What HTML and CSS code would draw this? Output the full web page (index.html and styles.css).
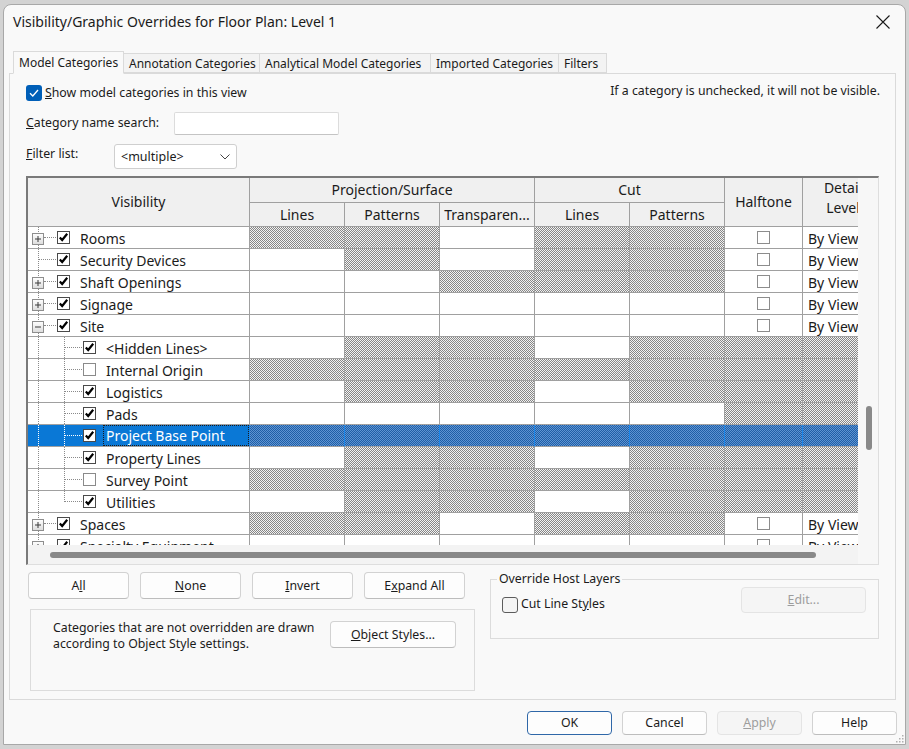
FILE: index.html
```html
<!DOCTYPE html>
<html>
<head>
<meta charset="utf-8">
<link rel="stylesheet" href="styles.css">
</head>
<body>
<svg class="defs" width="0" height="0">
  <defs>
    <linearGradient id="eg" x1="0" y1="0" x2="0" y2="1">
      <stop offset="0" stop-color="#ffffff"/>
      <stop offset="1" stop-color="#dcdcdc"/>
    </linearGradient>
    <symbol id="plus" viewBox="0 0 12 12">
      <rect x="0.5" y="0.5" width="11" height="11" fill="url(#eg)" stroke="#8e8e8e"/>
      <path d="M3 6H9M6 3V9" stroke="#3a3a3a" stroke-width="1"/>
    </symbol>
    <symbol id="minus" viewBox="0 0 12 12">
      <rect x="0.5" y="0.5" width="11" height="11" fill="url(#eg)" stroke="#8e8e8e"/>
      <path d="M3 6H9" stroke="#3a3a3a" stroke-width="1"/>
    </symbol>
    <symbol id="ck" viewBox="0 0 13 13">
      <rect x="0.5" y="0.5" width="12" height="12" fill="#fff" stroke="#4a4a4a"/>
      <path d="M2.8 6.4L5.2 9L10.2 2.8" fill="none" stroke="#000" stroke-width="2.2"/>
    </symbol>
    <symbol id="uck" viewBox="0 0 13 13">
      <rect x="0.5" y="0.5" width="12" height="12" fill="#fff" stroke="#8a8a8a"/>
    </symbol>
    <symbol id="hb" viewBox="0 0 13 13">
      <rect x="0.5" y="0.5" width="12" height="12" fill="#fff" stroke="#8c8c8c"/>
    </symbol>
  </defs>
</svg>
<div class="dialog">
  <div class="titlebar">
    <span class="title">Visibility/Graphic Overrides for Floor Plan: Level 1</span>
    <svg class="close" width="14" height="14" viewBox="0 0 14 14"><path d="M0.5 0.5L13.5 13.5M13.5 0.5L0.5 13.5" stroke="#1a1a1a" stroke-width="1.1"/></svg>
  </div>
  <div class="tabs">
    <div class="tab active t1">Model Categories</div>
    <div class="tab t2">Annotation Categories</div>
    <div class="tab t3">Analytical Model Categories</div>
    <div class="tab t4">Imported Categories</div>
    <div class="tab t5">Filters</div>
  </div>
  <div class="panel">
    <div class="row-top">
      <div class="chkline">
        <span class="cbx-blue"><svg width="16" height="16" viewBox="0 0 16 16"><path d="M4 8.2L6.8 11L12 5" fill="none" stroke="#fff" stroke-width="1.3"/></svg></span>
        <span class="lbl"><u>S</u>how model categories in this view</span>
      </div>
      <span class="lbl hint">If a category is unchecked, it will not be visible.</span>
    </div>
    <div class="row-search">
      <span class="lbl w148"><u>C</u>ategory name search:</span>
      <span class="input"></span>
    </div>
    <div class="row-filter">
      <span class="lbl w88"><u>F</u>ilter list:</span>
      <span class="select"><span class="seltext">&lt;multiple&gt;</span><svg width="10" height="6" viewBox="0 0 10 6"><path d="M0.5 0.5L5 5L9.5 0.5" fill="none" stroke="#444" stroke-width="1"/></svg></span>
    </div>

    <div class="grid">
      <div class="grid-main">
        <div class="grid-view">
          <div class="hdr">
            <div class="hc vis-h">Visibility</div>
            <div class="hc ps">Projection/Surface</div>
            <div class="hc cut">Cut</div>
            <div class="hc half">Halftone</div>
            <div class="hc det">Detail<br>Level</div>
            <div class="hc">Lines</div>
            <div class="hc">Patterns</div>
            <div class="hc">Transparen...</div>
            <div class="hc">Lines</div>
            <div class="hc">Patterns</div>
          </div>

          <div class="row">
            <div class="vis top"><svg class="exp"><use href="#plus"/></svg><span class="conn c12"></span><svg class="cb"><use href="#ck"/></svg><span class="name">Rooms</span></div>
            <div class="h"></div><div class="h"></div><div class="w"></div><div class="h"></div><div class="h"></div>
            <div class="w ht"><svg class="hb"><use href="#hb"/></svg></div><div class="w bv">By View</div>
          </div>
          <div class="row">
            <div class="vis top"><span class="sp6"></span><span class="conn c18"></span><svg class="cb"><use href="#ck"/></svg><span class="name">Security Devices</span></div>
            <div class="w"></div><div class="h"></div><div class="w"></div><div class="h"></div><div class="h"></div>
            <div class="w ht"><svg class="hb"><use href="#hb"/></svg></div><div class="w bv">By View</div>
          </div>
          <div class="row">
            <div class="vis top"><svg class="exp"><use href="#plus"/></svg><span class="conn c12"></span><svg class="cb"><use href="#ck"/></svg><span class="name">Shaft Openings</span></div>
            <div class="w"></div><div class="w"></div><div class="h"></div><div class="h"></div><div class="h"></div>
            <div class="w ht"><svg class="hb"><use href="#hb"/></svg></div><div class="w bv">By View</div>
          </div>
          <div class="row">
            <div class="vis top"><svg class="exp"><use href="#plus"/></svg><span class="conn c12"></span><svg class="cb"><use href="#ck"/></svg><span class="name">Signage</span></div>
            <div class="w"></div><div class="w"></div><div class="w"></div><div class="w"></div><div class="w"></div>
            <div class="w ht"><svg class="hb"><use href="#hb"/></svg></div><div class="w bv">By View</div>
          </div>
          <div class="row">
            <div class="vis top site"><svg class="exp"><use href="#minus"/></svg><span class="conn c12"></span><svg class="cb"><use href="#ck"/></svg><span class="name">Site</span></div>
            <div class="w"></div><div class="w"></div><div class="w"></div><div class="w"></div><div class="w"></div>
            <div class="w ht"><svg class="hb"><use href="#hb"/></svg></div><div class="w bv">By View</div>
          </div>
          <div class="row">
            <div class="vis child"><span class="sp32"></span><span class="conn c18"></span><svg class="cb"><use href="#ck"/></svg><span class="name">&lt;Hidden Lines&gt;</span></div>
            <div class="w"></div><div class="h"></div><div class="h"></div><div class="w"></div><div class="h"></div><div class="h"></div><div class="h"></div>
          </div>
          <div class="row">
            <div class="vis child"><span class="sp32"></span><span class="conn c18"></span><svg class="cb"><use href="#uck"/></svg><span class="name">Internal Origin</span></div>
            <div class="h"></div><div class="h"></div><div class="h"></div><div class="h"></div><div class="h"></div><div class="h"></div><div class="h"></div>
          </div>
          <div class="row">
            <div class="vis child"><span class="sp32"></span><span class="conn c18"></span><svg class="cb"><use href="#ck"/></svg><span class="name">Logistics</span></div>
            <div class="w"></div><div class="h"></div><div class="h"></div><div class="w"></div><div class="h"></div><div class="h"></div><div class="h"></div>
          </div>
          <div class="row">
            <div class="vis child"><span class="sp32"></span><span class="conn c18"></span><svg class="cb"><use href="#ck"/></svg><span class="name">Pads</span></div>
            <div class="w"></div><div class="w"></div><div class="w"></div><div class="w"></div><div class="w"></div><div class="h"></div><div class="h"></div>
          </div>
          <div class="row sel">
            <div class="vis child"><span class="sp32"></span><span class="conn c18"></span><svg class="cb"><use href="#ck"/></svg><span class="name focus">Project Base Point</span></div>
            <div class="h"></div><div class="h"></div><div class="h"></div><div class="h"></div><div class="h"></div><div class="h"></div><div class="h"></div>
          </div>
          <div class="row">
            <div class="vis child"><span class="sp32"></span><span class="conn c18"></span><svg class="cb"><use href="#ck"/></svg><span class="name">Property Lines</span></div>
            <div class="w"></div><div class="h"></div><div class="h"></div><div class="w"></div><div class="h"></div><div class="h"></div><div class="h"></div>
          </div>
          <div class="row">
            <div class="vis child"><span class="sp32"></span><span class="conn c18"></span><svg class="cb"><use href="#uck"/></svg><span class="name">Survey Point</span></div>
            <div class="h"></div><div class="h"></div><div class="h"></div><div class="h"></div><div class="h"></div><div class="h"></div><div class="h"></div>
          </div>
          <div class="row">
            <div class="vis child last"><span class="sp32"></span><span class="conn c18"></span><svg class="cb"><use href="#ck"/></svg><span class="name">Utilities</span></div>
            <div class="w"></div><div class="h"></div><div class="h"></div><div class="w"></div><div class="h"></div><div class="h"></div><div class="h"></div>
          </div>
          <div class="row">
            <div class="vis top"><svg class="exp"><use href="#plus"/></svg><span class="conn c12"></span><svg class="cb"><use href="#ck"/></svg><span class="name">Spaces</span></div>
            <div class="h"></div><div class="h"></div><div class="w"></div><div class="h"></div><div class="h"></div>
            <div class="w ht"><svg class="hb"><use href="#hb"/></svg></div><div class="w bv">By View</div>
          </div>
          <div class="row">
            <div class="vis top"><svg class="exp"><use href="#plus"/></svg><span class="conn c12"></span><svg class="cb"><use href="#ck"/></svg><span class="name">Specialty Equipment</span></div>
            <div class="w"></div><div class="w"></div><div class="w"></div><div class="w"></div><div class="w"></div>
            <div class="w ht"><svg class="hb"><use href="#hb"/></svg></div><div class="w bv">By View</div>
          </div>
        </div>
        <div class="hscroll"><div class="hthumb"></div></div>
      </div>
      <div class="vscroll"><div class="vthumb"></div></div>
    </div>

    <div class="lower">
      <div class="lower-left">
        <div class="btnrow">
          <button class="btn b101">A<u>l</u>l</button>
          <button class="btn b101"><u>N</u>one</button>
          <button class="btn b101"><u>I</u>nvert</button>
          <button class="btn b101">E<u>x</u>pand All</button>
        </div>
        <div class="note">
          <p class="notetext">Categories that are not overridden are drawn according to Object Style settings.</p>
          <button class="btn objst"><u>O</u>bject Styles...</button>
        </div>
      </div>
      <fieldset class="host">
        <legend>Override Host Layers</legend>
        <div class="hostrow">
          <span class="cbx-round"></span>
          <span class="lbl">Cut Line St<u>y</u>les</span>
          <button class="btn dis edit"><u>E</u>dit...</button>
        </div>
      </fieldset>
    </div>
  </div>
  <div class="footer">
    <button class="btn fb ok">OK</button>
    <button class="btn fb">Cancel</button>
    <button class="btn fb dis"><u>A</u>pply</button>
    <button class="btn fb">Help</button>
  </div>
  <svg class="grip" width="8" height="8" viewBox="0 0 8 8"><g fill="#b0b0b0"><rect x="6" y="0" width="1.5" height="1.5"/><rect x="3" y="3" width="1.5" height="1.5"/><rect x="6" y="3" width="1.5" height="1.5"/><rect x="0" y="6" width="1.5" height="1.5"/><rect x="3" y="6" width="1.5" height="1.5"/><rect x="6" y="6" width="1.5" height="1.5"/></g></svg>
</div>
</body>
</html>
```
FILE: styles.css
```css
* { box-sizing: border-box; }
html, body { margin: 0; padding: 0; }
body {
  background: #d3d3d3;
  font-family: "Noto Sans", "Open Sans", sans-serif;
  color: #1b1b1b;
  width: 909px;
  height: 749px;
  overflow: hidden;
}
.defs { position: absolute; width: 0; height: 0; overflow: hidden; }

.dialog {
  position: relative;
  margin: 4px 0 0 3px;
  width: 903px;
  height: 741px;
  background: #f9f9f9;
  border: 1px solid #a8a8a8;
  border-radius: 8px 8px 0 0;
  display: flex;
  flex-direction: column;
  overflow: hidden;
}

/* title */
.titlebar {
  height: 46px;
  flex: none;
  display: flex;
  align-items: flex-start;
  padding: 7px 15px 0 9px;
}
.title { font-size: 14px; line-height: 20px; }
.close { margin-left: auto; margin-top: 3px; }

/* tabs */
.tabs {
  height: 22px;
  flex: none;
  display: flex;
  align-items: flex-end;
  padding-left: 9px;
  position: relative;
  z-index: 1;
}
.tab {
  height: 20px;
  font-size: 12px;
  line-height: 19px;
  padding-left: 5px;
  white-space: nowrap;
  background: #f3f3f3;
  border-top: 1px solid #dadada;
  border-right: 1px solid #dadada;
  border-bottom: 1px solid #dadada;
}
.tab.active {
  height: 23px;
  margin-bottom: -1px;
  line-height: 21px;
  background: #f9f9f9;
  border: 1px solid #dadada;
  border-bottom: 1px solid #f9f9f9;
}
.t1 { width: 111px; }
.t2 { width: 136px; }
.t3 { width: 171px; }
.t4 { width: 128px; }
.t5 { width: 48px; }

/* panel */
.panel {
  flex: none;
  margin-left: 5px;
  width: 887px;
  height: 627px;
  border: 1px solid #dadada;
  padding: 0 14px 0 16px;
  display: flex;
  flex-direction: column;
}
.lbl { font-size: 12.3px; line-height: 16px; white-space: nowrap; }
.row-top {
  margin-top: 11px;
  height: 16px;
  display: flex;
  align-items: center;
  justify-content: space-between;
}
.chkline { display: flex; align-items: center; gap: 3px; }
.cbx-blue {
  width: 16px; height: 16px;
  background: #005fb8;
  border-radius: 3px;
  display: block;
}
.cbx-blue svg { display: block; }
.hint { margin-right: 1px; margin-top: -4px; }

.row-search {
  margin-top: 11px;
  height: 22px;
  display: flex;
  align-items: center;
}
.w148 { width: 148px; }
.w88 { width: 88px; }
.input {
  width: 165px;
  height: 23px;
  background: #fff;
  border: 1px solid #dcdcdc;
  border-bottom-color: #c4c4c4;
  border-radius: 2px;
}
.row-filter {
  margin-top: 10px;
  height: 24px;
  display: flex;
  align-items: flex-start;
}
.row-filter .lbl { line-height: 20px; }
.select {
  width: 123px;
  height: 25px;
  background: #fff;
  border: 1px solid #cfcfcf;
  border-radius: 3px;
  display: flex;
  align-items: center;
  padding: 0 6px 0 6px;
}
.seltext { font-size: 12.5px; line-height: 16px; flex: 1; }

/* grid */
.grid {
  margin-top: 8px;
  width: 853px;
  height: 389px;
  border-top: 2px solid #7a7a7a;
  border-left: 2px solid #7a7a7a;
  border-right: 1px solid #dedede;
  border-bottom: 1px solid #dedede;
  display: flex;
  flex: none;
}
.grid-main { width: 830px; display: flex; flex-direction: column; }
.grid-view { height: 367px; overflow: hidden; background: #fff; }
.hscroll { flex: 1; background: #f3f3f3; padding: 7px 0 0 22px; }
.hthumb { width: 766px; height: 6px; background: #898989; border-radius: 3px; }
.vscroll { width: 20px; background: #f7f7f7; padding: 228px 0 0 8px; }
.vthumb { width: 6px; height: 44px; background: #898989; border-radius: 3px; }

.hdr, .row {
  display: grid;
  grid-template-columns: 222px 95px 95px 95px 95px 95px 78px 80px;
  width: 855px;
  font-size: 14px;
}
.hdr { grid-template-rows: 25px 24px; background: #f0f0f0; }
.hc {
  border-right: 1px solid #a0a0a0;
  border-bottom: 1px solid #a0a0a0;
  text-align: center;
  line-height: 23px;
  white-space: nowrap;
  overflow: hidden;
}
.vis-h { grid-row: 1 / 3; line-height: 47px; }
.ps { grid-column: 2 / 5; }
.cut { grid-column: 5 / 7; }
.half { grid-column: 7; grid-row: 1 / 3; line-height: 47px; }
.det { grid-column: 8; grid-row: 1 / 3; line-height: 20px; padding-top: 0; border-right: none; }

.row > div {
  height: 22px;
  border-right: 1px solid #a0a0a0;
  border-bottom: 1px solid #a0a0a0;
}
.row > div:last-child { border-right: none; }
.h { background: repeating-conic-gradient(#868686 0 25%, #f2f2f2 0 50%) 0 0 / 2px 2px; }
.w { background: #fff; }
.ht { display: flex; align-items: center; justify-content: center; }
.hb { width: 13px; height: 13px; display: block; }
.bv { padding: 2px 0 0 5px; line-height: 19px; white-space: nowrap; }

.vis {
  display: flex;
  align-items: center;
  padding-left: 4px;
  background-color: #fff;
  background-image: repeating-linear-gradient(to bottom, #8a8a8a 0 1px, transparent 1px 2px);
  background-size: 1px 100%;
  background-repeat: no-repeat;
  background-position: 10px 0;
}
.vis.child {
  background-image:
    repeating-linear-gradient(to bottom, #8a8a8a 0 1px, transparent 1px 2px),
    repeating-linear-gradient(to bottom, #8a8a8a 0 1px, transparent 1px 2px);
  background-size: 1px 100%, 1px 100%;
  background-position: 10px 0, 36px 0;
}
.vis.child.last { background-size: 1px 100%, 1px 11px; }
.exp { width: 12px; height: 12px; display: block; flex: none; margin-top: 2px; }
.conn { height: 0; border-top: 1px dotted #8a8a8a; flex: none; }
.c12 { width: 12px; }
.c18 { width: 18px; }
.sp6 { width: 6px; flex: none; }
.sp32 { width: 32px; flex: none; }
.cb { width: 13px; height: 13px; display: block; flex: none; margin-left: 1px; }
.name { margin-left: 10px; padding-top: 2px; line-height: 19px; white-space: nowrap; }

.sel > div { border-right-color: #1a86ea; }
.sel .vis {
  background-color: #0a78d6;
  color: #fff;
  background-image:
    repeating-linear-gradient(to bottom, #ffffff 0 1px, transparent 1px 2px),
    repeating-linear-gradient(to bottom, #ffffff 0 1px, transparent 1px 2px);
}
.sel .conn { border-top-color: #ffffff; }
.sel .h { background: repeating-conic-gradient(#1f5ea6 0 25%, #5e94d2 0 50%) 0 0 / 2px 2px; }
.name.focus {
  flex: 1;
  align-self: stretch;
  margin-left: 7px;
  padding: 1px 0 0 2px;
  border: 1px dotted #1a1a1a;
  line-height: 18px;
}

/* lower */
.lower {
  margin-top: 7px;
  display: flex;
  padding-left: 2px;
  gap: 15px;
}
.lower-left { width: 447px; }
.btnrow { display: flex; gap: 11px; }
.btn {
  font-family: "Noto Sans", "Open Sans", sans-serif;
  font-size: 12.3px;
  color: #1b1b1b;
  background: #fdfdfd;
  border: 1px solid #d2d2d2;
  border-bottom-color: #bdbdbd;
  border-radius: 4px;
  padding: 0;
  line-height: 16px;
}
.b101 { width: 101px; height: 27px; }
.note {
  margin: 10px 0 0 2px;
  width: 445px;
  height: 82px;
  border: 1px solid #dcdcdc;
  display: flex;
  align-items: flex-start;
  padding: 10px 0 0 22px;
}
.notetext {
  margin: 0;
  width: 277px;
  font-size: 12.3px;
  line-height: 16px;
}
.objst { width: 126px; height: 27px; margin-top: 1px; }

.host {
  margin: 0;
  width: 389px;
  height: 67px;
  border: 1px solid #dcdcdc;
  padding: 0 12px 0 11px;
}
.host legend {
  font-size: 12.3px;
  line-height: 14px;
  padding: 0 2px;
  margin-left: -5px;
}
.hostrow { display: flex; align-items: flex-start; margin-top: 1px; }
.cbx-round {
  width: 16px; height: 16px;
  border: 1px solid #5c5c5c;
  border-radius: 3px;
  background: #f4f4f4;
  margin-top: 10px;
  flex: none;
}
.hostrow .lbl { margin: 9px 0 0 3px; }
.edit { margin-left: auto; width: 125px; height: 26px; }
.btn.dis { background: #f5f5f5; color: #9d9d9d; border-color: #e4e4e4; }

/* footer */
.footer {
  flex: 1;
  display: flex;
  justify-content: flex-end;
  align-items: flex-start;
  gap: 10px;
  padding: 11px 8px 0 0;
}
.fb { width: 85px; height: 24px; }
.ok { border: 1px solid #2f67a8; }
.grip { position: absolute; right: 1px; bottom: 1px; }
```
